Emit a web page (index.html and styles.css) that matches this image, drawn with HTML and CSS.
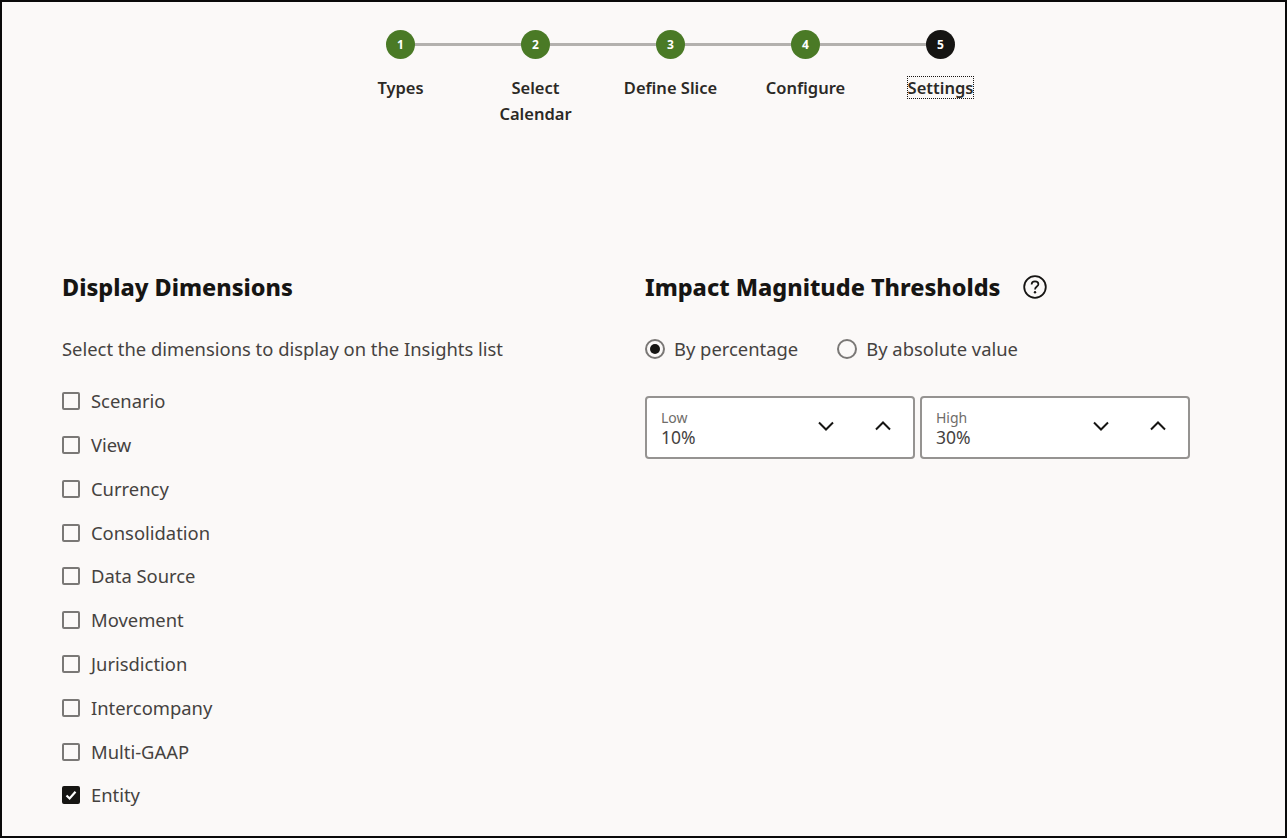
FILE: index.html
```html
<!DOCTYPE html>
<html lang="en">
<head>
  <meta charset="UTF-8">
  <title>Insights Settings</title>
  <link rel="stylesheet" href="styles.css">
</head>
<body>
  <div class="frame">
    <div class="stepper">
      <div class="step done"><span class="dot">1</span><span class="step-label">Types</span></div>
      <div class="step done"><span class="dot">2</span><span class="step-label">Select Calendar</span></div>
      <div class="step done"><span class="dot">3</span><span class="step-label">Define Slice</span></div>
      <div class="step done"><span class="dot">4</span><span class="step-label">Configure</span></div>
      <div class="step current"><span class="dot">5</span><span class="step-label">Settings</span></div>
    </div>

    <div class="columns">
      <div class="col-left">
        <h2>Display Dimensions</h2>
        <p class="hint">Select the dimensions to display on the Insights list</p>
        <div class="check-list">
          <div class="check"><span class="box"></span>Scenario</div>
          <div class="check"><span class="box"></span>View</div>
          <div class="check"><span class="box"></span>Currency</div>
          <div class="check"><span class="box"></span>Consolidation</div>
          <div class="check"><span class="box"></span>Data Source</div>
          <div class="check"><span class="box"></span>Movement</div>
          <div class="check"><span class="box"></span>Jurisdiction</div>
          <div class="check"><span class="box"></span>Intercompany</div>
          <div class="check"><span class="box"></span>Multi-GAAP</div>
          <div class="check">
            <span class="box checked">
              <svg width="14" height="14" viewBox="0 0 14 14"><path d="M2.5 7.5 L5.6 10.5 L11.5 3.8" fill="none" stroke="#fff" stroke-width="2.2"/></svg>
            </span>Entity
          </div>
        </div>
      </div>

      <div class="col-right">
        <h2 class="with-help">Impact Magnitude Thresholds
          <svg class="help" width="26" height="26" viewBox="0 0 26 26">
            <circle cx="13" cy="13" r="10.8" fill="none" stroke="#161513" stroke-width="1.8"/>
            <path d="M9.6 10.4 C9.6 8.4 11.1 7.3 13 7.3 C15 7.3 16.4 8.5 16.4 10.2 C16.4 12.4 13 12.7 13 15.4" fill="none" stroke="#161513" stroke-width="1.7"/>
            <circle cx="13" cy="18.3" r="1.2" fill="#161513"/>
          </svg>
        </h2>
        <div class="radios">
          <div class="radio"><span class="ring on"></span>By percentage</div>
          <div class="radio"><span class="ring"></span>By absolute value</div>
        </div>
        <div class="spinners">
          <div class="spinner">
            <div class="spin-text"><span class="spin-label">Low</span><span class="spin-value">10%</span></div>
            <svg class="chev" width="18" height="12" viewBox="0 0 18 12"><path d="M2 2.5 L9 9.5 L16 2.5" fill="none" stroke="#161513" stroke-width="2"/></svg>
            <svg class="chev" width="18" height="12" viewBox="0 0 18 12"><path d="M2 9.5 L9 2.5 L16 9.5" fill="none" stroke="#161513" stroke-width="2"/></svg>
          </div>
          <div class="spinner">
            <div class="spin-text"><span class="spin-label">High</span><span class="spin-value">30%</span></div>
            <svg class="chev" width="18" height="12" viewBox="0 0 18 12"><path d="M2 2.5 L9 9.5 L16 2.5" fill="none" stroke="#161513" stroke-width="2"/></svg>
            <svg class="chev" width="18" height="12" viewBox="0 0 18 12"><path d="M2 9.5 L9 2.5 L16 9.5" fill="none" stroke="#161513" stroke-width="2"/></svg>
          </div>
        </div>
      </div>
    </div>
  </div>
</body>
</html>
```

FILE: styles.css
```css
html, body { margin: 0; padding: 0; }
body { font-family: "Noto Sans", "Open Sans", sans-serif; color: #161513; background: #000; }
.frame { box-sizing: border-box; width: 1287px; height: 838px; border: 2px solid #0a0a0a; background: #fbf9f8; overflow: hidden; }

.stepper { display: grid; grid-template-columns: repeat(5, 135px); width: 675px; margin: 28px 0 0 331px; }
.step { display: flex; flex-direction: column; align-items: center; position: relative; }
.step:not(:last-child)::after { content: ""; position: absolute; top: 13px; left: 50%; width: 100%; height: 3px; background: #b3b1ae; }
.dot { position: relative; z-index: 1; box-sizing: border-box; width: 29px; height: 29px; border-radius: 50%; display: flex; align-items: center; justify-content: center; font-size: 12px; font-weight: 700; color: #fff; }
.done .dot { background: #4a7a26; }
.current .dot { background: #161513; }
.step-label { margin-top: 16px; width: 100px; text-align: center; font-size: 16.5px; font-weight: 600; line-height: 26px; color: #2b2926; }
.current .step-label { width: auto; line-height: 21px; margin-top: 18px; outline: 1px dotted #161513; }

.columns { display: flex; margin: 145px 0 0 60px; }
.col-left { width: 583px; }
.col-right { width: 546px; }
h2 { margin: 0; font-size: 23.4px; line-height: 30px; font-weight: 800; }
.with-help { display: flex; align-items: center; gap: 21px; }
.help { flex: none; }

.hint { margin: 35px 0 0; font-size: 18.4px; line-height: 24px; color: #45423f; }
.check-list { margin-top: 18px; }
.check { display: flex; align-items: center; height: 43.78px; font-size: 18.4px; color: #45423f; }
.box { box-sizing: border-box; width: 18px; height: 18px; margin: 1px 11px 0 0; border: 2px solid #7a7876; border-radius: 2px; display: flex; align-items: center; justify-content: center; }
.box.checked { background: #161513; border-color: #161513; }

.radios { display: flex; gap: 39px; margin-top: 35px; }
.radio { display: flex; align-items: center; gap: 9px; font-size: 18.4px; line-height: 24px; color: #45423f; }
.ring { box-sizing: border-box; width: 20px; height: 20px; border: 2px solid #7a7876; border-radius: 50%; display: flex; align-items: center; justify-content: center; }
.ring.on::before { content: ""; width: 10px; height: 10px; border-radius: 50%; background: #161513; }

.spinners { display: flex; gap: 5px; margin-top: 35px; }
.spinner { box-sizing: border-box; width: 270px; height: 63px; background: #fff; border: 2px solid #959391; border-radius: 4px; display: flex; align-items: center; padding: 2px 21px 0 14px; }
.spin-text { flex: 1; display: flex; flex-direction: column; }
.spin-label { font-size: 14px; line-height: 16px; color: #6f6c69; }
.spin-value { font-size: 17.5px; line-height: 22px; color: #45423f; }
.chev { margin-left: 39px; margin-bottom: 5px; }
```
